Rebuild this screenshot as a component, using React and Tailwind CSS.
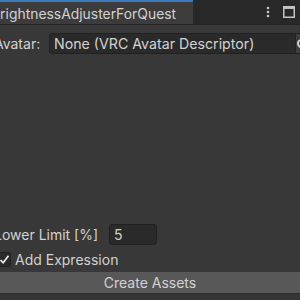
export default function App() {
  return (
    <div
      className="w-[300px] h-[300px] overflow-hidden bg-[#383838] text-[#d2d2d2] flex flex-col"
      style={{ fontFamily: "Inter, 'Noto Sans', sans-serif" }}
    >
      {/* tab strip */}
      <div className="h-[24px] flex bg-[#282828] shrink-0">
        <div className="w-[193px] bg-[#3c3c3c] border-t-2 border-[#3a79bb] flex items-center overflow-hidden">
          <span className="-ml-[9px] mt-[2px] text-[13.9px] whitespace-nowrap">BrightnessAdjusterForQuest</span>
        </div>
        <div className="flex-1 flex items-center justify-end gap-[13px] pr-[5px]">
          <svg width="4" height="12" viewBox="0 0 4 12">
            <circle cx="2" cy="2" r="1.3" fill="#c4c4c4" />
            <circle cx="2" cy="6" r="1.3" fill="#c4c4c4" />
            <circle cx="2" cy="10" r="1.3" fill="#c4c4c4" />
          </svg>
          <svg width="12" height="12" viewBox="0 0 12 12">
            <rect x="0.75" y="0.75" width="10.5" height="10.5" fill="none" stroke="#c4c4c4" strokeWidth="1.5" />
            <rect x="0.75" y="0.75" width="10.5" height="2.2" fill="#c4c4c4" />
          </svg>
        </div>
      </div>
      <div className="h-[1px] bg-[#232323]" />

      <div className="flex-1 flex flex-col -ml-[6px]">
        <div className="flex items-center h-[21px] mt-[8px]">
          <span className="text-[14px] w-[55px] shrink-0">Avatar:</span>
          <div className="flex-1 h-[21px] bg-[#2a2a2a] border border-[#212121] rounded-[3px] flex items-center pl-[4px] -mr-[20px] overflow-hidden">
            <span className="text-[14.2px] whitespace-nowrap flex-1">None (VRC Avatar Descriptor)</span>
            <div className="w-[24px] h-full border-l border-[#232323] bg-[#3e3e3e] flex items-center pl-[1px]">
              <div className="w-[9px] h-[9px] rounded-full border-2 border-[#d0d0d0]" />
            </div>
          </div>
        </div>

        <div className="flex-1" />

        <div className="flex items-center h-[21px]">
          <span className="text-[14px] w-[115px] shrink-0">Lower Limit [%]</span>
          <div className="w-[48px] h-[21px] bg-[#2a2a2a] border border-[#212121] rounded-[3px] flex items-center pl-[4px]">
            <span className="text-[14px]">5</span>
          </div>
        </div>
        <div className="flex items-center h-[20px] mt-[4px]">
          <div className="w-[14px] h-[15px] ml-[3px] bg-[#2a2a2a] border border-[#212121] rounded-[2px] flex items-center justify-center">
            <svg width="11" height="11" viewBox="0 0 11 11">
              <path d="M1.5 6 L4.2 8.8 L9.5 1.8" fill="none" stroke="#ececec" strokeWidth="1.7" />
            </svg>
          </div>
          <span className="text-[14px] ml-[4px]">Add Expression</span>
        </div>
      </div>

      <div className="h-[22px] mt-[3px] bg-[#585858] border-b border-[#2a2a2a] flex items-center justify-center shrink-0">
        <span className="text-[14px]">Create Assets</span>
      </div>
      <div className="h-[6px] bg-[#353535] shrink-0" />
    </div>
  );
}
